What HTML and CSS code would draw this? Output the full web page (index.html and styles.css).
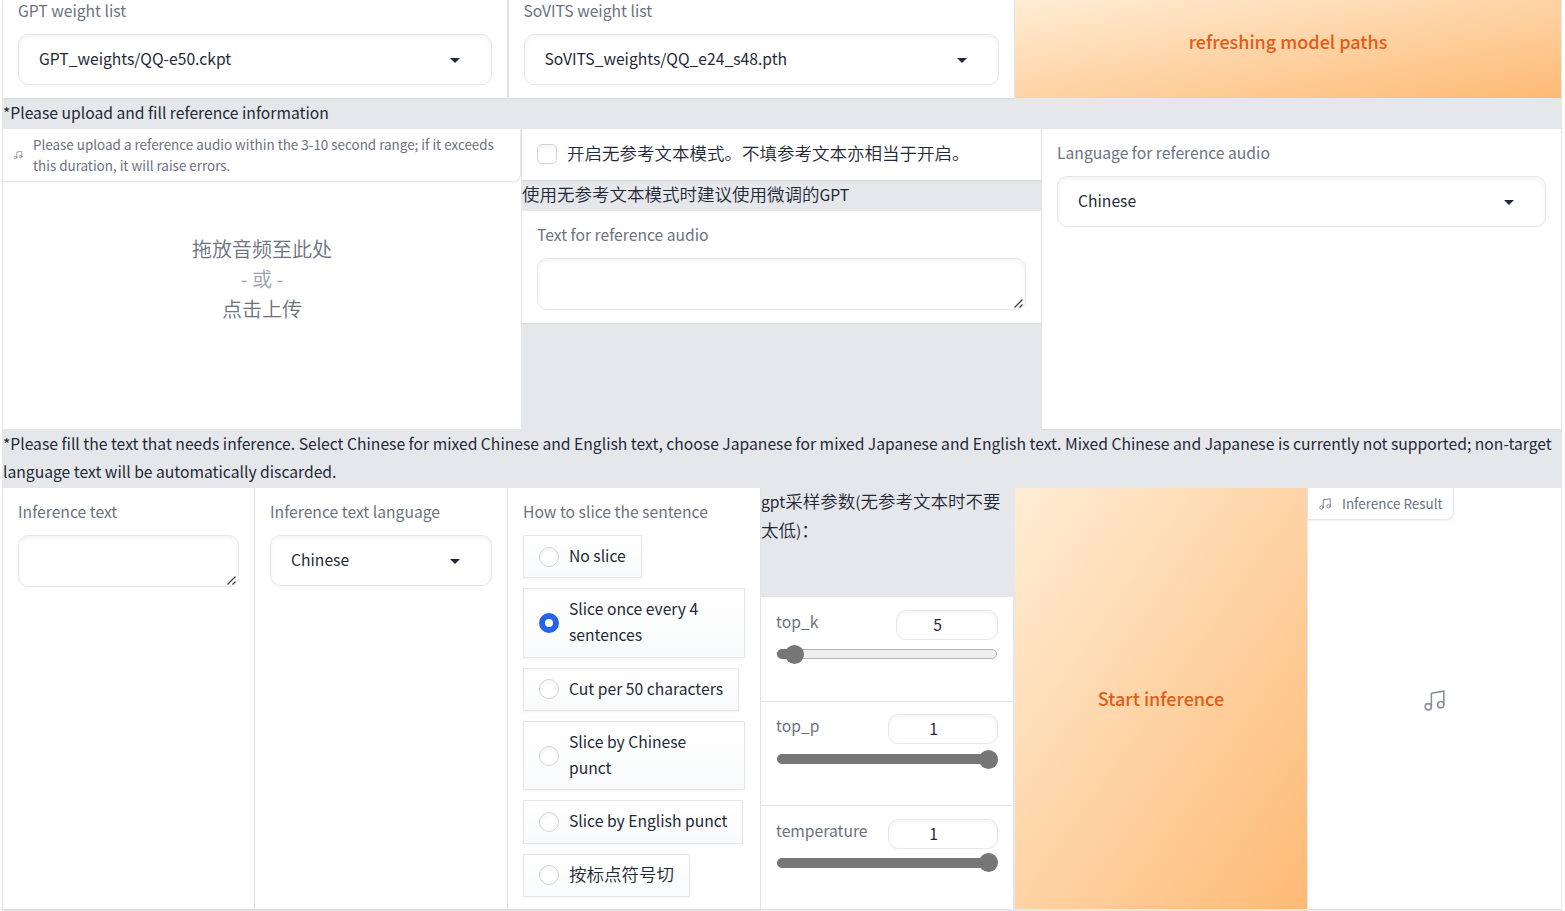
FILE: index.html
```html
<!DOCTYPE html>
<html lang="en">
<head>
<meta charset="utf-8">
<title>Inference</title>
<link rel="stylesheet" href="styles.css">
</head>
<body>
<svg class="defs" width="0" height="0">
  <symbol id="music" viewBox="0 0 24 24"><g fill="none" stroke="currentColor" stroke-width="1.5" stroke-linecap="round" stroke-linejoin="round"><path d="M9 18V5l12-2v13"/><circle cx="6" cy="18" r="3"/><circle cx="18" cy="16" r="3"/></g></symbol>
  <symbol id="caret" viewBox="0 0 10 5"><path d="M0 0h10L5 5z" fill="currentColor"/></symbol>
  <symbol id="grip" viewBox="0 0 9 9"><path d="M0.5 8.5l8-8M5.5 8.5l3-3" fill="none" stroke="#444" stroke-width="1.3"/></symbol>
</svg>
<main class="app">
  <section class="row models">
    <div class="panel">
      <div class="label">GPT weight list</div>
      <div class="field select"><span>GPT_weights/QQ-e50.ckpt</span><svg class="caret"><use href="#caret"/></svg></div>
    </div>
    <div class="panel">
      <div class="label">SoVITS weight list</div>
      <div class="field select"><span>SoVITS_weights/QQ_e24_s48.pth</span><svg class="caret"><use href="#caret"/></svg></div>
    </div>
    <button class="action refresh">refreshing model paths</button>
  </section>
  <p class="note note-one">*Please upload and fill reference information</p>
  <section class="row reference">
    <div class="upload">
      <div class="tag tag-wide"><svg class="tag-icon small"><use href="#music"/></svg><span>Please upload a reference audio within the 3-10 second range; if it exceeds<br>this duration, it will raise errors.</span></div>
      <div class="drop"><span>拖放音频至此处</span><span class="or">- 或 -</span><span>点击上传</span></div>
    </div>
    <div class="middle">
      <div class="check"><span class="box"></span><span class="zh">开启无参考文本模式。不填参考文本亦相当于开启。</span></div>
      <p class="hint"><span class="zh">使用无参考文本模式时建议使用微调的</span>GPT</p>
      <div class="panel text-ref">
        <div class="label">Text for reference audio</div>
        <div class="field area"><svg class="grip"><use href="#grip"/></svg></div>
      </div>
    </div>
    <div class="panel">
      <div class="label">Language for reference audio</div>
      <div class="field select"><span>Chinese</span><svg class="caret"><use href="#caret"/></svg></div>
    </div>
  </section>
  <p class="note note-two"><span class="line">*Please fill the text that needs inference. Select Chinese for mixed Chinese and English text, choose Japanese for mixed Japanese and English text. Mixed Chinese and Japanese is currently not supported; non-target</span><span class="line">language text will be automatically discarded.</span></p>
  <section class="row inference">
    <div class="panel">
      <div class="label">Inference text</div>
      <div class="field area"><svg class="grip"><use href="#grip"/></svg></div>
    </div>
    <div class="panel">
      <div class="label">Inference text language</div>
      <div class="field select"><span>Chinese</span><svg class="caret"><use href="#caret"/></svg></div>
    </div>
    <div class="panel">
      <div class="label">How to slice the sentence</div>
      <div class="options">
        <div class="option"><span class="radio"></span><span>No slice</span></div>
        <div class="option tall"><span class="radio on"></span><span>Slice once every 4<br>sentences</span></div>
        <div class="option"><span class="radio"></span><span>Cut per 50 characters</span></div>
        <div class="option tall"><span class="radio"></span><span>Slice by Chinese<br>punct</span></div>
        <div class="option"><span class="radio"></span><span>Slice by English punct</span></div>
        <div class="option"><span class="radio"></span><span class="zh">按标点符号切</span></div>
      </div>
    </div>
    <div class="sampling">
      <p class="params">gpt<span class="zh">采样参数</span>(<span class="zh">无参考文本时不要</span><br><span class="zh">太低</span>)<span class="zh">：</span></p>
      <div class="slider first"><div class="head"><span>top_k</span><span class="number narrow">5</span></div><div class="track"><div class="fill low"></div></div></div>
      <div class="slider second"><div class="head"><span>top_p</span><span class="number">1</span></div><div class="track"><div class="fill"></div></div></div>
      <div class="slider"><div class="head"><span>temperature</span><span class="number">1</span></div><div class="track"><div class="fill"></div></div></div>
    </div>
    <button class="action start">Start inference</button>
    <div class="result">
      <div class="tag"><svg class="tag-icon"><use href="#music"/></svg><span>Inference Result</span></div>
      <div class="empty"><svg><use href="#music"/></svg></div>
    </div>
  </section>
</main>
</body>
</html>
```
FILE: styles.css
```css
* { box-sizing: border-box; }
body {
  margin: 0;
  background: #fff;
  color: #1f2937;
  font-family: "Noto Sans CJK SC", sans-serif;
  font-size: 15.68px;
  line-height: 26px;
  overflow: hidden;
}
.defs { position: absolute; }
p { margin: 0; }
.app {
  width: 1560px;
  height: 911px;
  margin-left: 2px;
  padding: 0 1px;
  background: #e5e7eb;
}
.row { display: grid; column-gap: 1px; }
.models { grid-template-columns: 504px 505px 546px; height: 98px; column-gap: 1.5px; }
.reference { grid-template-columns: 518px 519px 519px; height: 300px; }
.inference { grid-template-columns: 251px 252px 252px 253px 292px 253px; height: 421px; }
.panel {
  padding: 12px 15px;
  background: #fff;
  box-shadow: 0 1px 2px rgba(0, 0, 0, .06);
}
.models .panel { padding-top: 0; }
.label { height: 25px; line-height: 23px; color: #6b7280; white-space: nowrap; }
.models .label { height: 24px; line-height: 21px; }
.field {
  position: relative;
  height: 51px;
  margin-top: 10px;
  border: 1px solid #e5e7eb;
  border-radius: 10px;
  background: #fff;
  box-shadow: inset 0 2px 4px rgba(0, 0, 0, .05);
}
.select { display: flex; align-items: center; justify-content: space-between; padding: 0 31px 0 20px; }
.select span { margin-top: -1px; }
.caret { width: 10px; height: 5px; margin-top: 2px; }
.area { height: 52px; }
.grip { position: absolute; right: 2px; bottom: 1px; width: 9px; height: 9px; }
.action {
  padding: 0 0 2px;
  border: 0;
  background: linear-gradient(to bottom right, #ffedd5, #fdba74);
  color: #e25c16;
  font: 500 18px/26px "Noto Sans CJK SC", sans-serif;
}
.refresh { padding-bottom: 17px; }
.note { white-space: nowrap; }
.note-one { height: 31px; line-height: 29px; }
.note-two { height: 59px; padding-top: 1px; }
.line { display: block; line-height: 28px; }
.note-two .line { line-height: 28px; }
.zh { font-size: 17.5px; font-weight: 350; }
.upload, .result { position: relative; display: flex; flex-direction: column; background: #fff; }
.tag {
  display: flex;
  align-items: center;
  align-self: flex-start;
  gap: 10px;
  height: 32px;
  padding: 0 10px;
  border: 1px solid #e5e7eb;
  border-width: 0 1px 1px 0;
  border-radius: 0 0 8px 0;
  box-shadow: 0 1px 2px rgba(0, 0, 0, .05);
  color: #6b7280;
  font-size: 13.43px;
  line-height: 21px;
  white-space: nowrap;
}
.tag-wide { align-self: stretch; height: 53px; }
.tag-icon { flex: none; width: 14px; height: 14px; }
.tag-icon.small { width: 10px; height: 10px; }
.drop { display: flex; flex-direction: column; align-items: center; padding-top: 52px; color: #6b7280; font-size: 20px; font-weight: 350; line-height: 30px; }
.or { color: #9ca3af; }
.check { display: flex; align-items: center; gap: 10px; height: 51px; padding: 0 0 2px 15px; background: #fff; box-shadow: 0 1px 2px rgba(0, 0, 0, .06); }
.check .zh { margin-top: -2px; }
.box { width: 20px; height: 20px; border: 1px solid #d1d5db; border-radius: 5px; box-shadow: inset 0 2px 4px rgba(0, 0, 0, .05); }
.hint { height: 31px; line-height: 27px; }
.text-ref { height: 112px; }
.options { display: flex; flex-direction: column; align-items: flex-start; gap: 10px; margin-top: 10px; }
.option {
  display: flex;
  align-items: center;
  gap: 10px;
  height: 43.2px;
  padding: 0 15px;
  border: 1px solid #e5e7eb;
  background: linear-gradient(#fff, #f9fafb);
  box-shadow: 0 1px 2px rgba(0, 0, 0, .05);
  white-space: nowrap;
}
.option span:last-child { margin-top: -1px; }
.option:first-child span:last-child, .option .zh:last-child { margin-top: -2px; }
.option.tall { width: 100%; height: 69.5px; }
.radio { width: 20px; height: 20px; border: 1px solid #d1d5db; border-radius: 50%; background: #fff; box-shadow: inset 0 2px 4px rgba(0, 0, 0, .05); }
.radio.on { border: 6px solid #2563eb; box-shadow: none; }
.sampling { display: flex; flex-direction: column; gap: 1px; }
.params { flex: none; height: 109px; margin-top: -1px; line-height: 28px; white-space: nowrap; }
.slider { flex: 1; width: 252px; padding: 13px 15px; background: #fff; color: #6b7280; }
.slider.first { flex: 0 0 104px; }
.slider.second { padding-top: 12px; }
.second .track { margin-top: 10px; }
.head { display: flex; justify-content: space-between; height: 30px; line-height: 24px; }
.number { width: 110px; height: 30px; padding-right: 19px; border: 1px solid #e5e7eb; border-radius: 10px; box-shadow: inset 0 2px 4px rgba(0, 0, 0, .05); color: #1f2937; line-height: 28px; text-align: center; }
.number.narrow { width: 102px; }
.track { height: 10px; margin: 9px 1px 0; border: 1px solid #b2b2b2; border-radius: 5px; background: #efefef; }
.fill { position: relative; height: 10px; margin: -1px; border-radius: 5px; background: #767676; }
.fill.low { width: 26px; }
.fill::after { content: ""; position: absolute; top: -4.5px; right: -1px; width: 19px; height: 19px; border-radius: 50%; background: #767676; }
.empty { position: absolute; inset: 0; display: flex; align-items: center; justify-content: center; padding-top: 4px; color: #8b9099; }
.empty svg { width: 25px; height: 25px; }
```
